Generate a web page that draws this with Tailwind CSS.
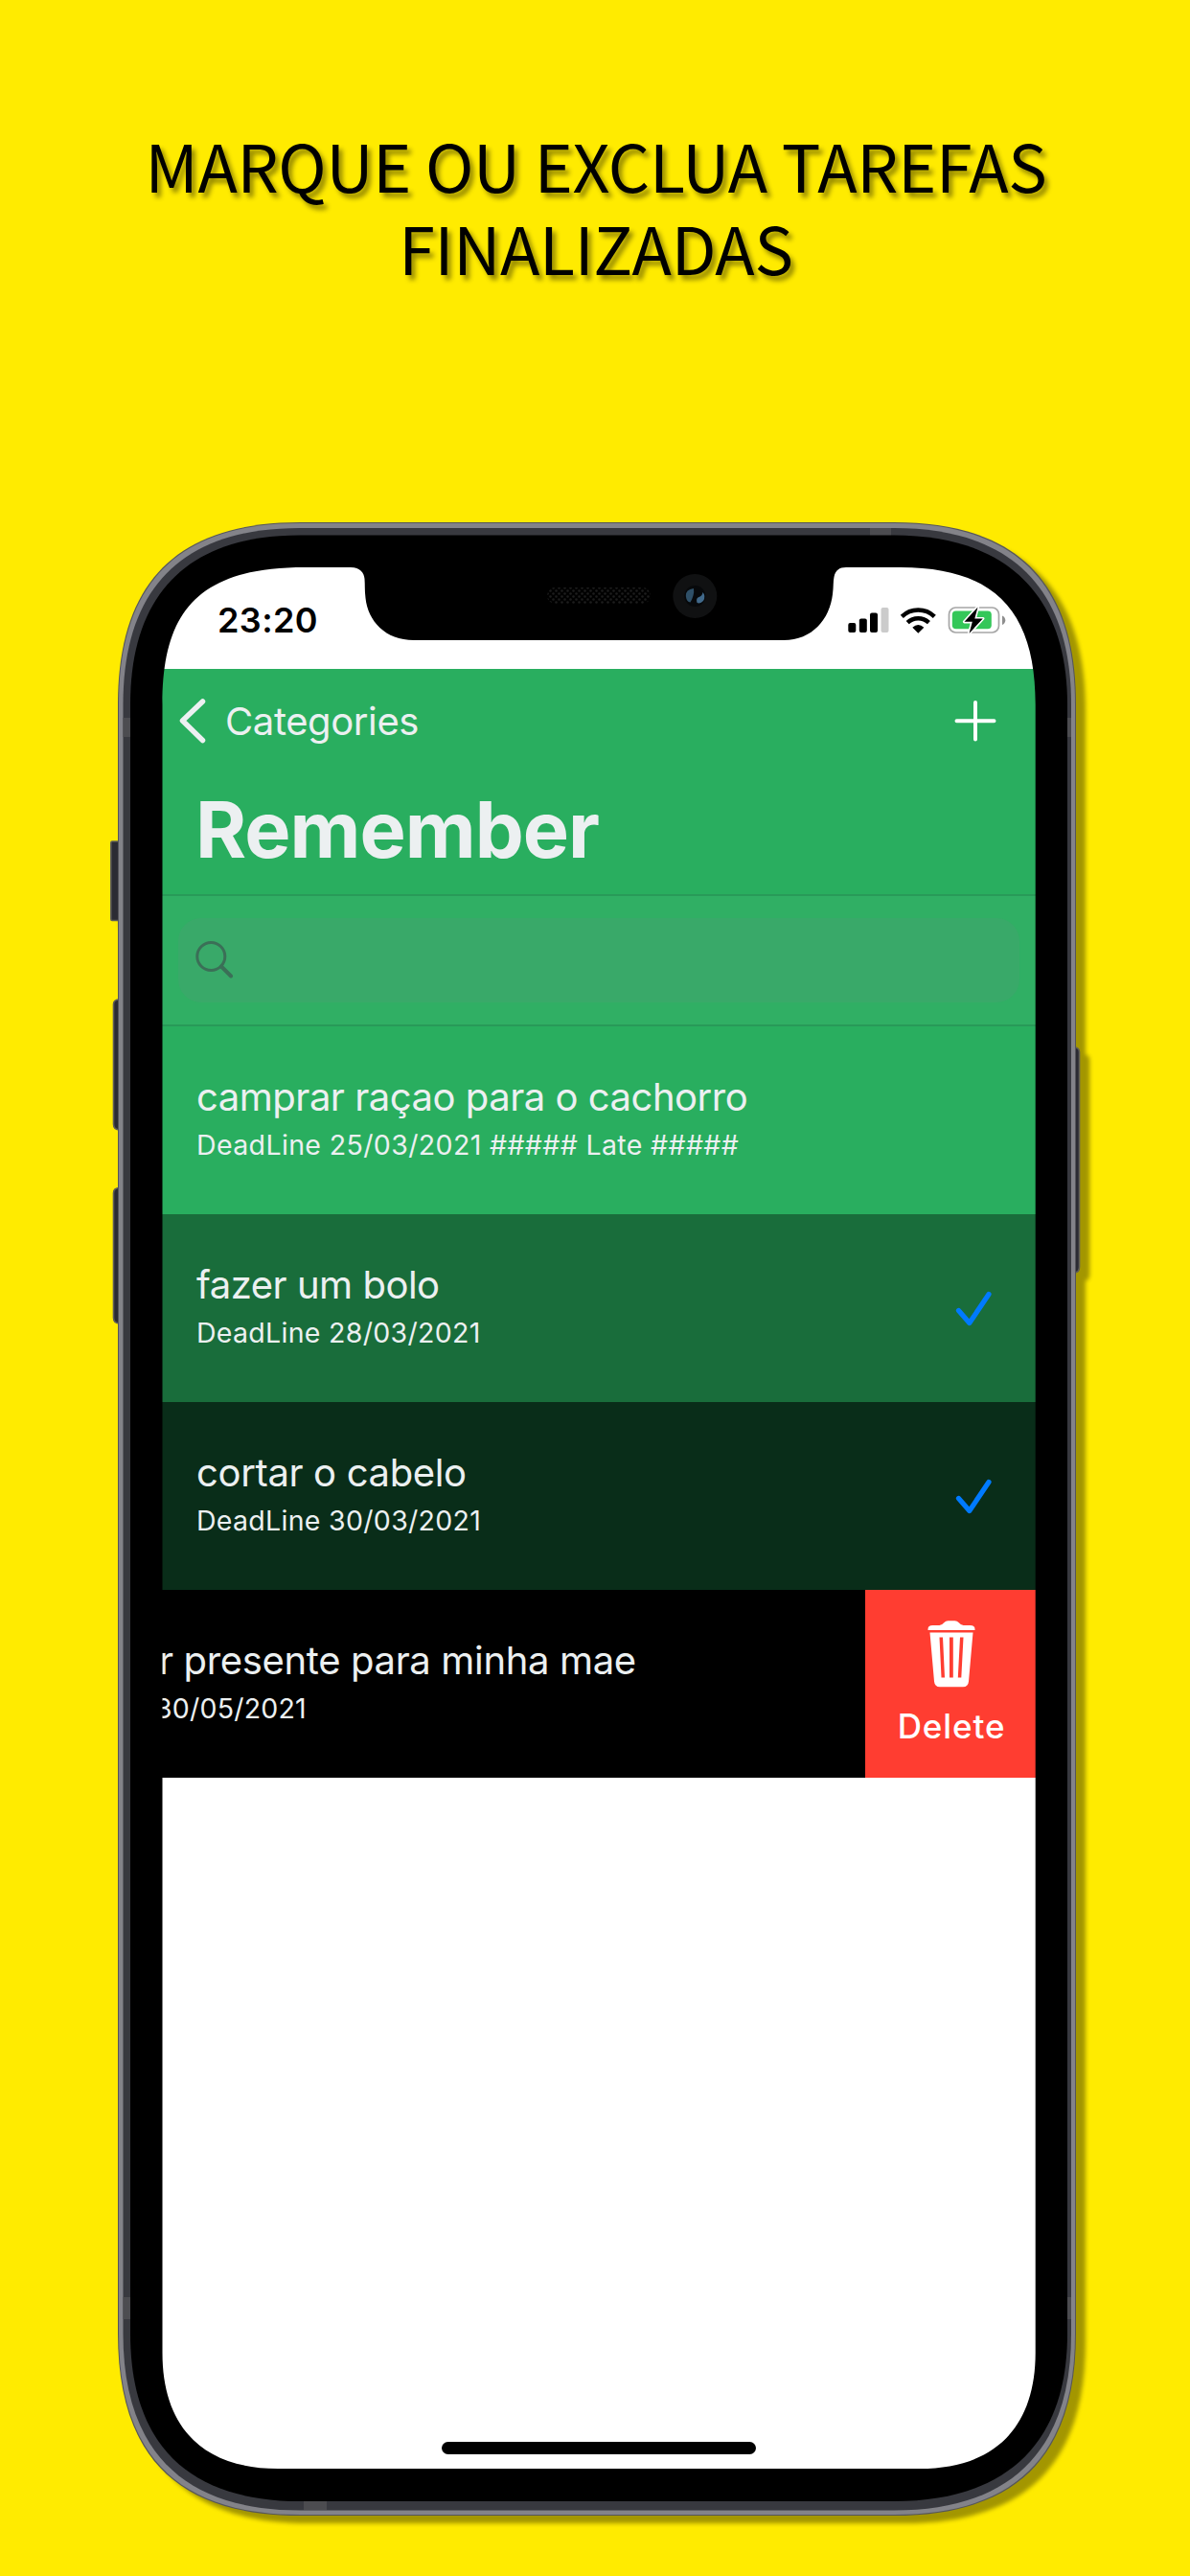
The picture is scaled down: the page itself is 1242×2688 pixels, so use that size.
<!DOCTYPE html>
<html lang="pt-BR">
<head>
<meta charset="utf-8">
<title>Remember</title>
<script src="https://cdn.jsdelivr.net/npm/@tailwindcss/browser@4"></script>
</head>
<body class="bg-[#ffeb00]">
<main class="relative flex h-[2688px] w-[1242px] flex-col overflow-hidden bg-[#ffeb00] font-['Inter','Liberation_Sans',sans-serif]">
  <h1 class="pt-[129px] pl-[2px] text-center font-['Noto_Sans_CJK_JP','Noto_Sans',sans-serif] text-[68px] leading-[86px] tracking-[-0.3px] text-black [text-shadow:4px_5px_5px_rgba(0,0,0,0.42)]">MARQUE OU EXCLUA TAREFAS<br>FINALIZADAS</h1>

  <section class="relative mt-[244px] ml-[123px] h-[2080px] w-[1000px] pt-[47px] pl-[46px]">
    <!-- phone body and side buttons -->
    <svg class="absolute -top-[5px] -left-[13px] h-[2110px] w-[1040px] drop-shadow-[10px_8px_2px_rgba(0,0,0,0.36)]" viewBox="110 540 1040 2110">
      <g fill="#2b2b33" stroke="#5e5c58" stroke-width="1.6">
        <path d="M125 878H117Q115.800 878 115.800 879.500V959Q115.800 960.500 117 960.500H125Z"/>
        <path d="M125 1043Q118.500 1043 118.500 1048V1173Q118.500 1179 125 1179Z"/>
        <path d="M125 1239.500Q118.500 1239.500 118.500 1245V1375Q118.500 1381 125 1381Z"/>
        <path d="M1121 1093Q1126.500 1093 1126.500 1098V1322Q1126.500 1328 1121 1328Z"/>
      </g>
      <path d="M123 735C123 607 185 545 313 545H933C1061 545 1123 607 1123 735V2435C1123 2563 1061 2625 933 2625H313C185 2625 123 2563 123 2435Z" fill="#55555a"/>
      <path d="M124 735C124 608 186 546 313 546H933C1060 546 1122 608 1122 735V2435C1122 2562 1060 2624 933 2624H313C186 2624 124 2562 124 2435Z" fill="#838389"/>
      <path d="M128.500 735C128.500 613 191 551 313 551H933C1055 551 1118 613 1118 735V2435C1118 2557 1055 2619.500 933 2619.500H313C191 2619.500 128.500 2557 128.500 2435Z" fill="#38393f"/>
      <g fill="#4c4c50">
        <path d="M128.500 749h8v20h-8zM128.500 2397h8v23h-8zM1113 749h5v20h-5zM1113 2397h5v23h-5zM908 551h22v8h-22zM317 2609h24v10h-24z"/>
      </g>
      <path d="M136 735C136 619 197 558.500 313 558.500H933C1049 558.500 1114 619 1114 735V2435C1114 2551 1049 2610 933 2610H313C197 2610 136 2551 136 2435Z" fill="#000"/>
    </svg>

    <div class="relative flex h-[1984px] w-[912px] flex-col overflow-hidden rounded-[80px] bg-white">
      <!-- status bar -->
      <div class="flex h-[106px] shrink-0 items-start justify-between pr-[31px] pl-[58px]">
        <div class="pt-[33px] text-[36px] leading-[44px] font-semibold tracking-[0.4px] text-black">23:20</div>
        <svg class="mt-[38px] h-[34px] w-[168px]" viewBox="882 630 168 34">
          <rect x="885.300" y="650" width="8" height="10" rx="2"/>
          <rect x="896.800" y="645.500" width="8" height="14.500" rx="2"/>
          <rect x="908" y="639.500" width="8" height="20.500" rx="2"/>
          <rect x="919.500" y="634" width="8" height="26" rx="2" fill="#cbcbcb"/>
          <g fill="none" stroke="#000" stroke-width="4.400">
            <path d="M941.300 643.300A24.500 24.500 0 0 1 975.300 643.300"/>
            <path d="M947.200 649.700A16 16 0 0 1 969.400 649.700"/>
          </g>
          <path d="M952.300 654.700Q958.300 649.500 964.300 654.700L958.300 660.800Z"/>
          <rect x="990.500" y="634" width="52" height="26" rx="7" fill="#fff" stroke="#a6a6a6" stroke-width="1.700"/>
          <path d="M1046 642.500Q1049.300 644 1049.300 647.200Q1049.300 650.500 1046 652Z" fill="#8e8e8e"/>
          <rect x="993.800" y="637.500" width="41" height="18.700" rx="4" fill="#34c759"/>
          <path d="M1020.500 633.500L1006.500 648.800H1014.800L1011.500 661L1025.800 645.500H1017.300Z" fill="#000" stroke="#fff" stroke-width="3.200" stroke-linejoin="round" paint-order="stroke"/>
        </svg>
      </div>

      <!-- navigation bar -->
      <header class="h-[235px] shrink-0 bg-[#29ae5f] text-[#ecf0f1]">
        <div class="flex h-[108px] items-center pr-[40px] pl-[17px]">
          <svg class="h-[52px] w-[32px]" viewBox="186 726 32 52" fill="none" stroke="currentColor" stroke-width="5.500" stroke-linecap="round" stroke-linejoin="round"><path d="M211.500 732L190.500 752L211.500 772.500"/></svg>
          <span class="ml-[17px] pt-[2px] text-[40px] leading-[50px] tracking-[-0.4px]">Categories</span>
          <svg class="ml-auto h-[46px] w-[46px]" viewBox="995 729 46 46" fill="none" stroke="#fff" stroke-width="4" stroke-linecap="round"><path d="M998.500 752.300H1037.500M1018 733V771.500"/></svg>
        </div>
        <h2 class="mt-[10px] pl-[35px] text-[81px] leading-[100px] font-bold tracking-[-0.98px]">Remember</h2>
      </header>

      <!-- search -->
      <div class="h-[138px] shrink-0 border-y-2 border-[#289a58] bg-[#30af64] px-[17px] pt-[23px]">
        <div class="flex h-[88px] items-center rounded-[24px] bg-[#39a969] pl-[15px]">
          <svg class="h-[48px] w-[48px]" viewBox="201 978 48 48" fill="none" stroke="#3b6f57" stroke-linecap="round"><circle cx="220.300" cy="998" r="14.500" stroke-width="3"/><path d="M231 1008.500L241 1018.500" stroke-width="4"/></svg>
        </div>
      </div>

      <!-- tasks -->
      <ul class="shrink-0 text-[#ecf0f1]">
        <li class="h-[195.500px] bg-[#29ae5f] pt-[49px] pl-[36px]">
          <p class="text-[40px] leading-[50px] tracking-[-0.48px]">camprar raçao para o cachorro</p>
          <p class="mt-[7px] text-[28.5px] leading-[36px] tracking-[0.37px]">DeadLine 25/03/2021 ##### Late #####</p>
        </li>
        <li class="flex h-[196px] bg-[#196d3b] pt-[49px] pl-[36px]">
          <div>
            <p class="text-[40px] leading-[50px] tracking-[-0.48px]">fazer um bolo</p>
            <p class="mt-[7px] text-[28.5px] leading-[36px] tracking-[0.3px]">DeadLine 28/03/2021</p>
          </div>
          <svg class="mt-[30px] mr-[45px] ml-auto h-[40px] w-[40px]" viewBox="995 1346 40 40" fill="none" stroke="#007aff" stroke-width="5.200" stroke-linecap="round" stroke-linejoin="round"><path d="M999.500 1367.500L1010.800 1380.500L1031 1350.500"/></svg>
        </li>
        <li class="flex h-[196px] bg-[#092d19] pt-[49px] pl-[36px]">
          <div>
            <p class="text-[40px] leading-[50px] tracking-[-0.35px]">cortar o cabelo</p>
            <p class="mt-[7px] text-[28.5px] leading-[36px] tracking-[0.3px]">DeadLine 30/03/2021</p>
          </div>
          <svg class="mt-[30px] mr-[45px] ml-auto h-[40px] w-[40px]" viewBox="995 1346 40 40" fill="none" stroke="#007aff" stroke-width="5.200" stroke-linecap="round" stroke-linejoin="round"><path d="M999.500 1367.500L1010.800 1380.500L1031 1350.500"/></svg>
        </li>
        <li class="flex h-[196px] bg-black">
          <div class="pt-[49px]">
            <p class="-ml-[3px] text-[40px] leading-[50px] tracking-[-0.35px]">r presente para minha mae</p>
            <p class="mt-[7px] -ml-[7px] text-[28.5px] leading-[36px] tracking-[0.2px]">30/05/2021</p>
          </div>
          <div class="ml-auto flex w-[178px] flex-col items-center bg-[#ff3d31] pt-[30px] pl-[2px] text-white">
            <svg class="h-[74px] w-[54px]" viewBox="966.500 1688 54 74" fill="#fff">
              <path d="M969 1699Q969 1695 974 1695H981Q984 1694.500 986 1692Q987.500 1690.300 990 1690.300H997Q999.500 1690.300 1001 1692Q1003 1694.500 1006 1695H1013Q1018 1695 1018 1699V1700H969Z"/>
              <path fill-rule="evenodd" d="M971 1702.500H1016L1011.500 1753.500Q1011 1759.300 1005.500 1759.300H981.500Q976 1759.300 975.500 1753.500ZM981 1707.500L983 1749.500H986.500L984.500 1707.500ZM991.500 1707.500V1749.500H995.300V1707.500ZM1002.500 1707.500L1000.300 1749.500H1003.800L1006 1707.500Z"/>
            </svg>
            <span class="mt-[16px] text-[35px] leading-[44px] font-medium tracking-[0.9px]">Delete</span>
          </div>
        </li>
      </ul>

      <div class="mx-auto mt-auto mb-[15px] h-[13px] w-[328px] rounded-full bg-black"></div>
    </div>

    <!-- bezel around the display, with notch, speaker and camera -->
    <svg class="pointer-events-none absolute top-[5px] left-[7px] h-[2070px] w-[990px]" viewBox="130 550 990 2070">
      <path fill="#000" fill-rule="evenodd" d="M137 735C137 619 198 559.500 313 559.500H933C1048 559.500 1113 620 1113 735V2435C1113 2550 1048 2609 933 2609H313C198 2609 137 2550 137 2435ZM169.500 735C169.500 640 205 592 318 592H366C376 592 380 598 380.500 604C381 610 380.500 616 381.500 624C384 648 402 668 432 668H818C848 668 866 646 869 620C870 612 869.500 606 870.500 602C872 595 876 592 883 592H940C1040 592 1080.700 640 1080.700 735V2455C1080.700 2533 1038 2576 960 2576H290C212 2576 169.500 2533 169.500 2455Z"/>
      <defs>
        <pattern id="mesh" width="6" height="6" patternUnits="userSpaceOnUse"><circle cx="1.500" cy="1.500" r="1.300" fill="#1c1c1c"/><circle cx="4.500" cy="4.500" r="1.300" fill="#1c1c1c"/></pattern>
      </defs>
      <rect x="571" y="613" width="108" height="17" rx="8.500" fill="url(#mesh)"/>
      <circle cx="725.300" cy="622" r="23" fill="#101112"/>
      <circle cx="725.300" cy="622" r="11" fill="#07090b"/>
      <path d="M724 614Q715.500 615 715.800 622Q716.500 628 720.500 628.500Q725 621 724 614Z" fill="#2f5068"/>
      <path d="M733.500 618Q737 622 734 627Q731 630.500 727.500 629Q726 624 729.500 623Q733 622 733.500 618Z" fill="#41698a"/>
    </svg>
  </section>
</main>
</body>
</html>
